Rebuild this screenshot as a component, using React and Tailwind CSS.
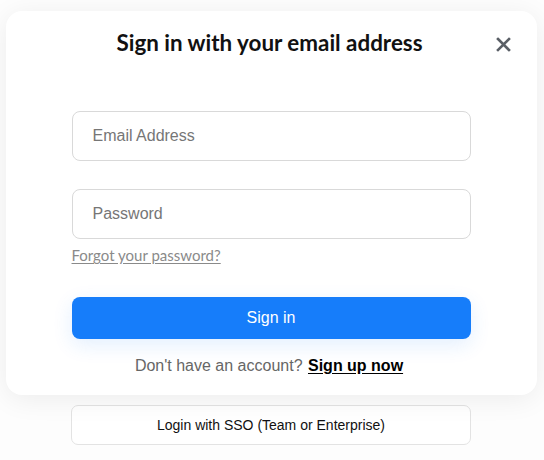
import React from "react";

export default function App() {
  return (
    <div className="w-[544px] h-[460px] bg-[#fdfdfd] overflow-hidden" style={{ fontFamily: '"Liberation Sans", Arial, sans-serif' }}>
      <div className="pt-[11px] pl-[6px]">
        <div className="relative w-[531px] h-[384px] bg-white rounded-[16px] shadow-[0_4px_28px_rgba(0,0,0,0.07)] flex flex-col items-center pt-[18px]">
          <h1 className="text-[22.4px] leading-[27px] font-bold text-[#111] -ml-[4px]" style={{ fontFamily: 'Lato, "Noto Sans", sans-serif' }}>
            Sign in with your email address
          </h1>
          <button className="absolute right-[26px] top-[25px] w-[16px] h-[16px] flex items-center justify-center text-[#5a5f66]">
            <svg width="15" height="15" viewBox="0 0 15 15" fill="none" stroke="currentColor" strokeWidth="2.6" strokeLinecap="square">
              <path d="M2 2L13 13M13 2L2 13" />
            </svg>
          </button>
          <div className="w-[399px] mt-[55px] -ml-[1px] flex flex-col">
            <div className="h-[50px] rounded-[8px] border border-[#d9d9d9] flex items-center pl-[20px] text-[16px] text-[#767676]">
              Email Address
            </div>
            <div className="mt-[28px] h-[50px] rounded-[8px] border border-[#d9d9d9] flex items-center pl-[20px] text-[16px] text-[#767676]">
              Password
            </div>
            <div className="mt-[6px] text-[15px] leading-[20px] text-[#8a8a8a] underline underline-offset-2" style={{ fontFamily: 'Lato, "Noto Sans", sans-serif' }}>
              Forgot your password?
            </div>
            <button className="mt-[32px] h-[42px] rounded-[8px] bg-[#167dfa] text-white text-[16px] shadow-[0_6px_20px_rgba(22,125,250,0.12)]">
              Sign in
            </button>
            <div className="mt-[17px] text-[16px] leading-[20px] text-center text-[#666] -ml-[4px]">
              Don't have an account?{" "}
              <span className="font-bold text-black underline underline-offset-2 ml-[1px]">Sign up now</span>
            </div>
          </div>
        </div>
      </div>
      <div className="mt-[10px] ml-[71px] w-[400px] h-[40px] rounded-[7px] border border-[#e3e3e3] bg-white flex items-center justify-center text-[14px] text-[#111]">
        Login with SSO (Team or Enterprise)
      </div>
    </div>
  );
}
